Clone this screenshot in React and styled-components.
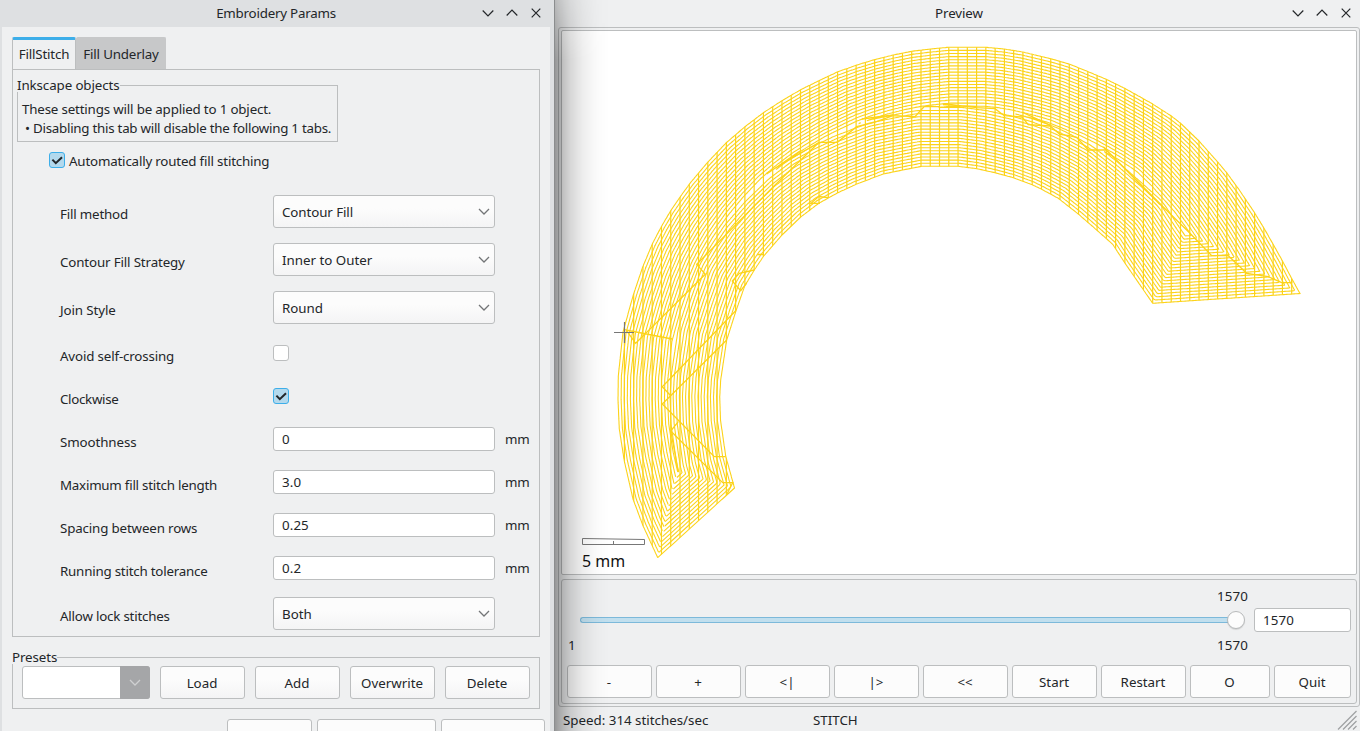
import React from 'react';
import styled, { createGlobalStyle } from 'styled-components';

const Global = createGlobalStyle`
  * { box-sizing: border-box; }
  body { margin: 0; overflow: hidden; background: #eff0f1; }
  button { font: inherit; color: inherit; }
`;

const Desktop = styled.div`
  display: flex;
  width: 1360px;
  height: 731px;
  overflow: hidden;
  background: #eff0f1;
  color: #232629;
  font: 13.33px/18px 'Noto Sans', sans-serif;
  white-space: nowrap;
`;

const Dialog = styled.section`
  position: relative;
  z-index: 1;
  flex: none;
  width: 555px;
  height: 731px;
  overflow: visible;
  background: #dee0e2;
  border-right: 1px solid #8b8d8e;
  &::after {
    content: '';
    position: absolute;
    left: 555px;
    top: 0;
    width: 54px;
    height: 731px;
    pointer-events: none;
    background: linear-gradient(to right, rgba(0,0,0,.37), rgba(0,0,0,.28) 10%, rgba(0,0,0,.16) 28%, rgba(0,0,0,.065) 52%, rgba(0,0,0,.015) 78%, transparent);
    mask-image: linear-gradient(to bottom, rgba(0,0,0,.6), #000 60px);
  }
`;

const TitleBar = styled.header`
  display: grid;
  grid-template-columns: 1fr auto 1fr;
  align-items: center;
  height: 27px;
  padding: 0 ${p => p.$right}px 0 ${p => p.$left}px;
`;
const Title = styled.span`
  grid-column: 2;
  margin-top: -2px;
  letter-spacing: ${p => p.$track || 0}px;
`;
const WindowButtons = styled.div`
  display: flex;
  justify-content: flex-end;
  gap: 12px;
  margin-top: -1px;
`;

const DialogBody = styled.div`
  display: flex;
  flex-direction: column;
  width: 548px;
  height: 704px;
  margin-left: 2px;
  padding: 10px 10px 0;
  background: #eff0f1;
  overflow: hidden;
  & > * { flex-shrink: 0; }
`;

const Tabs = styled.div`
  display: flex;
  height: 33px;
  margin-bottom: -1px;
`;
const Tab = styled.div`
  display: flex;
  align-items: center;
  justify-content: center;
  width: ${p => p.$w}px;
  height: 33px;
  padding-bottom: ${p => (p.$active ? 2 : 0)}px;
  letter-spacing: -0.17px;
  border: 1px solid ${p => (p.$active ? '#bcbebf' : '#c7c8c9')};
  border-top: ${p => (p.$active ? '3px solid #3daee9' : '1px solid #c7c8c9')};
  border-bottom-color: ${p => (p.$active ? '#eff0f1' : '#a2a4a5')};
  border-radius: 2px 2px 0 0;
  background: ${p => (p.$active ? '#eff0f1' : '#c7c8c9')};
`;

const TabPanel = styled.div`
  width: 528px;
  height: 568px;
  padding: 15px 4px 0;
  border: 1px solid #bcbebf;
`;

const Group = styled.fieldset`
  min-width: 0;
  width: ${p => p.$w}px;
  height: ${p => p.$h}px;
  margin: 0;
  padding: 0;
  border: 0;
  box-shadow: inset 0 0 0 1px #bcbebf;
`;
const GroupTitle = styled.div`
  width: fit-content;
  height: 16px;
  margin: -9px 0 2px 0;
  letter-spacing: -0.1px;
  background: #eff0f1;
`;
const Info = styled.div`
  padding: 6px 0 0 5px;
  line-height: 19px;
  letter-spacing: -0.17px;
`;
const Bullet = styled.div`
  padding-left: 3px;
  letter-spacing: -0.25px;
`;

const CheckRow = styled.label`
  display: flex;
  align-items: center;
  gap: 4px;
  height: 18px;
  margin: 9px 0 19px 32px;
  letter-spacing: -0.18px;
`;
const CheckText = styled.span`padding-top: 1px;`;
const Box = styled.span`
  display: flex;
  width: 16px;
  height: 16px;
  border: 1px solid ${p => (p.$on ? '#3daee9' : '#bcbebf')};
  border-radius: 3px;
  background: ${p => (p.$on ? '#b3d9ed' : '#fff')};
`;

const Row = styled.div`
  display: grid;
  grid-template-columns: 213px 222px auto;
  column-gap: 0;
  align-items: start;
  height: ${p => (p.$kind === 'select' ? 48 : 43)}px;
  margin-left: 43px;
  padding-top: ${p => ({ select: 7, check: 13, input: 9 })[p.$kind]}px;
`;
const RowLabel = styled.span`
  margin-top: ${p => ({ select: 10, check: 2, input: 6 })[p.$kind]}px;
  letter-spacing: ${p => p.$track}px;
`;
const Unit = styled.span`
  margin: 3px 0 0 10px;
  letter-spacing: -0.3px;
`;

const Select = styled.div`
  display: flex;
  align-items: center;
  justify-content: space-between;
  height: 33px;
  padding: 0 4px 0 8px;
  letter-spacing: ${p => p.$track}px;
  border: 1px solid #bcbebf;
  border-radius: 3px;
  background: linear-gradient(#fcfcfc 40%, #f4f4f5);
`;
const Field = styled.div`
  display: flex;
  align-items: center;
  width: ${p => (p.$w ? p.$w + 'px' : 'auto')};
  height: 24px;
  padding-left: 8px;
  letter-spacing: 0.1px;
  border: 1px solid #bcbebf;
  border-radius: 3px;
  background: #fff;
`;

const PresetGroup = styled(Group)`margin-top: 20px;`;
const PresetRow = styled.div`
  display: flex;
  gap: 10px;
  padding-left: 10px;
`;
const PresetCombo = styled.div`
  display: flex;
  justify-content: flex-end;
  width: 128px;
  height: 33px;
  border: 1px solid #bcbebf;
  border-radius: 3px;
  background: #fff;
`;
const PresetArrow = styled.div`
  display: flex;
  align-items: center;
  justify-content: center;
  width: 30px;
  margin: -1px;
  border-radius: 0 3px 3px 0;
  background: #a5a6a8;
`;

const Button = styled.button`
  width: ${p => p.$w || 85}px;
  height: 33px;
  padding: 0 1px 0 0;
  flex: none;
  border: 1px solid #bcbebf;
  border-radius: 3px;
  background: ${p => (p.$flat ? '#fcfcfc' : 'linear-gradient(#fcfcfc 40%, #f4f4f5)')};
`;
const Actions = styled.div`
  display: flex;
  gap: 5px;
  margin: 10px -5px 0 215px;
`;

const Preview = styled.section`
  flex: 1;
  min-width: 0;
  display: flex;
  flex-direction: column;
`;
const Frame = styled.div`
  display: flex;
  flex-direction: column;
  gap: 4px;
  height: 680px;
  margin-left: 3px;
  padding: 2px;
  border: 1px solid #bcbebf;
  border-radius: 3px;
`;
const Canvas = styled.div`
  height: 545px;
  border: 1px solid #bcbebf;
  border-radius: 2px;
  background: #fff;
`;
const Controls = styled.div`
  display: flex;
  flex-direction: column;
  height: 125px;
  padding: 6px 5px 0;
  border: 1px solid #bcbebf;
  border-radius: 3px;
`;
const SliderRow = styled.div`
  display: flex;
  align-items: center;
  height: 68px;
  margin-bottom: 11px;
`;
const SliderBlock = styled.div`
  display: flex;
  flex-direction: column;
  width: 687px;
`;
const SliderLabels = styled.div`
  display: flex;
  justify-content: space-between;
  height: 18px;
  padding: 0 6px 0 1px;
  letter-spacing: 0.15px;
`;
const Slider = styled.div`
  display: flex;
  align-items: center;
  height: 31px;
  padding-left: 13px;
`;
const Track = styled.div`
  width: 648px;
  height: 6px;
  border: 1px solid #7cb9da;
  border-right: 0;
  border-radius: 3px 0 0 3px;
  background: #c1dfee;
`;
const Knob = styled.div`
  width: 18px;
  height: 18px;
  margin-left: -1px;
  border: 1px solid #b8babb;
  border-radius: 50%;
  background: #fcfcfc;
  box-shadow: 0 1px 1px rgba(0,0,0,.12);
`;
const ButtonRow = styled.div`
  display: flex;
  gap: 4px;
`;
const StatusBar = styled.footer`
  display: grid;
  grid-template-columns: 250px 1fr auto;
  align-items: center;
  height: 24px;
  padding: 2px 3px 0 8px;
`;

const DownIcon = ({ color = '#232629' }) => (
  <svg width="12" height="12" viewBox="0 0 12 12" fill="none" stroke={color} strokeWidth="1.2"><path d="M.7 3.500 6 8.800l5.300-5.300" /></svg>
);
const UpIcon = () => (
  <svg width="12" height="12" viewBox="0 0 12 12" fill="none" stroke="#232629" strokeWidth="1.2"><path d="M.7 8.500 6 3.200l5.300 5.300" /></svg>
);
const CloseIcon = () => (
  <svg width="12" height="12" viewBox="0 0 12 12" fill="none" stroke="#232629" strokeWidth="1.2"><path d="m1.700 1.700 8.600 8.600m0-8.600-8.600 8.600" /></svg>
);
const WindowControls = () => <WindowButtons><DownIcon /><UpIcon /><CloseIcon /></WindowButtons>;
const Arrow = ({ color = '#737577' }) => (
  <svg width="12" height="12" viewBox="0 0 12 12" fill="none" stroke={color} strokeWidth="1.3"><path d="m1 3 5 5 5-5" /></svg>
);
const Check = ({ on }) => (
  <Box $on={on}>
    {on && <svg width="14" height="14" viewBox="0 0 14 14" fill="none" stroke="#232629" strokeWidth="2"><path d="m2.400 6.600 3.400 3.600 6.200-6" /></svg>}
  </Box>
);

const OUTLINE = [
  [657.7,557.7],[642.7,525],[633,499],[624.3,461],[619.3,429],[618,400],[618.3,376],[623,332],[633.3,295],[642.7,267],[652.3,244],[661.3,226.7],[670.7,210.7],[680.3,196.7],[690,183.3],[707,163],[726,143],[745,126.7],[763.7,112.5],[782,100.7],[800.7,89.7],[819,80.7],[837.3,72],[856,65.3],[874.3,59.7],[893.3,55],[911.7,51.3],[930.3,49],[948.3,47.3],[985.7,47.3],[1004.3,49],[1022.7,52],[1050.7,58.7],[1069,64],[1087.3,71.3],[1106.3,79.3],[1124.7,88.3],[1143.3,98.7],[1152.3,103.8],[1171,115.8],[1180.3,123],[1199,141],[1218.3,162.7],[1226.7,172.7],[1239.3,190],[1254.3,212.3],[1264,228.3],[1273,244],[1282.3,260.7],[1291.7,278.5],[1300,293.5],
  [1152.7,303.3],[1124.7,262.7],[1112.7,244.3],[1096.7,230],[1078.3,214],[1058.3,198.3],[1041.7,189.3],[1032.3,184.7],[1013.3,177.7],[995,172.7],[976.7,168.7],[958.3,166.3],[921.7,166.3],[902.7,170],[883.3,174],[856,184.3],[837.3,193],[818.7,203.3],[800.7,217],[782,235],[763.7,256],[754.3,270],[744.7,286],[735.7,311.7],[726.7,340],[720.7,380],[719.7,397],[720.5,420],[725.7,456],[734.5,488],
];

function distance(x, y) {
  let best = Infinity;
  for (let i = 0; i < OUTLINE.length; i++) {
    const [ax, ay] = OUTLINE[i];
    const [bx, by] = OUTLINE[(i + 1) % OUTLINE.length];
    const dx = bx - ax, dy = by - ay;
    const t = Math.max(0, Math.min(1, ((x - ax) * dx + (y - ay) * dy) / (dx * dx + dy * dy)));
    best = Math.min(best, Math.hypot(x - ax - t * dx, y - ay - t * dy));
  }
  return best;
}

function normal(i) {
  const n = OUTLINE.length;
  const [ax, ay] = OUTLINE[i % n];
  const [bx, by] = OUTLINE[(i + 1) % n];
  const len = Math.hypot(bx - ax, by - ay);
  return [-(by - ay) / len, (bx - ax) / len, len];
}

// Rows of the contour fill: the outline moved inwards by one row spacing at a time,
// with round joins at its hollow corners.
function contourRows(spacing) {
  let d = '';
  for (let off = 0; off < 80; off += spacing) {
    let last = null;
    const add = (x, y) => {
      if (distance(x, y) < off - 0.01) return;
      const join = last && Math.hypot(x - last[0], y - last[1]) < 6;
      d += `${join ? 'L' : 'M'}${x.toFixed(1)} ${y.toFixed(1)}`;
      last = [x, y];
    };
    for (let i = 0; i < OUTLINE.length; i++) {
      const [ax, ay] = OUTLINE[i];
      const [bx, by] = OUTLINE[(i + 1) % OUTLINE.length];
      const [nx, ny, len] = normal(i);
      const steps = Math.max(1, Math.ceil(len / 1.5));
      for (let s = 0; s <= steps; s++) {
        add(ax + ((bx - ax) * s) / steps + nx * off, ay + ((by - ay) * s) / steps + ny * off);
      }
      const [mx, my] = normal(i + 1);
      for (let s = 1; s < 6; s++) {
        const vx = nx + ((mx - nx) * s) / 6, vy = ny + ((my - ny) * s) / 6;
        const k = off / Math.hypot(vx, vy);
        add(bx + vx * k, by + vy * k);
      }
    }
  }
  return d;
}

const ROWS = contourRows(3.1);
const COLUMNS = Array.from({ length: 73 }, (_, i) => `M${(624.4 + i * 9.268).toFixed(2)} 40V565`).join('');
const TRAVEL = [
  'M766.7 173.3 819 142.3H837.3L856.7 126.7 874.3 122.3 893 115.7 915 116.7 924 106.7H940',
  'M766.7 174 800 151M861.7 119 893.3 115M943.3 103.7 976.7 107.7 995 108.7 1004.3 115.7 1022 117 1028.3 124.7 1050 126 1060 134.3 1069 135.7 1076.7 137.3 1088.3 150H1106.3L1163 206.7 1190 233.3 1211.7 255.7H1228.3L1246.7 273.3 1268.3 276.7 1281.7 282.7H1291.7V279',
  'M943 104.7 976 106.7M1022.7 112.3 1050 125M1103.3 146.7 1160 204.5',
  'M819 142.3 773.3 186.7 696.7 264.3 705.3 274.3 635.7 343.3 626 330 672.3 339',
  'M735.7 310.7 662.3 386.7 670 395M726.7 340 662.3 404 714.3 456.7H725.7M678.3 421.7 670.7 431 722.7 482.7H732.7L727 494M670.7 431 678.5 472',
  'M754.3 270 739.3 273.3 732.3 281 740.7 290.7 746.7 283M757 254.5H764M828.3 197.7 818.7 196.5 811 203.3H820',
].join('');

const StitchPlan = () => (
  <svg width="794" height="543" viewBox="562 31 794 543" fill="none" style={{ display: 'block' }}>
    <defs>
      <clipPath id="shape"><path d={'M' + OUTLINE.map(p => p.join(' ')).join('L') + 'Z'} /></clipPath>
    </defs>
    <g stroke="#fcd31a">
      <path d={ROWS} strokeWidth="1.1" />
      <path d={COLUMNS} strokeWidth="1.2" clipPath="url(#shape)" />
      <path d={TRAVEL} strokeWidth="1.3" />
    </g>
    <path d="M614 332.5H634M624.5 322V343" stroke="#777" strokeWidth="1.2" />
    <path d="M582.5 538.5 644.5 539.5V544.5H582.5ZM613.5 541V544" stroke="#777" />
    <text x="582" y="567" fill="#111" fontSize="16" fontFamily="'Noto Sans', sans-serif">5 mm</text>
  </svg>
);

const PARAMS = [
  ['select', 'Fill method', 'Contour Fill', -0.18, -0.08],
  ['select', 'Contour Fill Strategy', 'Inner to Outer', -0.14, 0],
  ['select', 'Join Style', 'Round', -0.1, 0],
  ['check', 'Avoid self-crossing', false, -0.15],
  ['check', 'Clockwise', true, -0.3],
  ['input', 'Smoothness', '0', -0.1],
  ['input', 'Maximum fill stitch length', '3.0', -0.23],
  ['input', 'Spacing between rows', '0.25', -0.15],
  ['input', 'Running stitch tolerance', '0.2', -0.21],
  ['select', 'Allow lock stitches', 'Both', -0.2, 0],
];

const Param = ({ kind, label, value, track, valueTrack }) => (
  <Row $kind={kind}>
    <RowLabel $kind={kind} $track={track}>{label}</RowLabel>
    {kind === 'select' && <Select $track={valueTrack}>{value}<Arrow /></Select>}
    {kind === 'check' && <Check on={value} />}
    {kind === 'input' && <><Field>{value}</Field><Unit>mm</Unit></>}
  </Row>
);

const PLAYBACK = [['-', 85], ['+', 85], ['<|', 85], ['|>', 85], ['<<', 85], ['Start', 85], ['Restart', 85], ['O', 80], ['Quit', 77]];

export default function App() {
  return (
    <Desktop>
      <Global />
      <Dialog>
        <TitleBar $left={10} $right={12}>
          <Title $track={-0.22}>Embroidery Params</Title>
          <WindowControls />
        </TitleBar>
        <DialogBody>
          <Tabs>
            <Tab $active $w={64}>FillStitch</Tab>
            <Tab $w={90}>Fill Underlay</Tab>
          </Tabs>
          <TabPanel>
            <Group $w={321} $h={57}>
              <GroupTitle>Inkscape objects</GroupTitle>
              <Info>
                <div>These settings will be applied to 1 object.</div>
                <Bullet>• Disabling this tab will disable the following 1 tabs.</Bullet>
              </Info>
            </Group>
            <CheckRow><Check on /><CheckText>Automatically routed fill stitching</CheckText></CheckRow>
            {PARAMS.map(([kind, label, value, track, valueTrack]) => (
              <Param key={label} kind={kind} label={label} value={value} track={track} valueTrack={valueTrack} />
            ))}
          </TabPanel>
          <PresetGroup $w={528} $h={52}>
            <GroupTitle>Presets</GroupTitle>
            <PresetRow>
              <PresetCombo><PresetArrow><Arrow color="#cfd0d1" /></PresetArrow></PresetCombo>
              <Button>Load</Button>
              <Button>Add</Button>
              <Button>Overwrite</Button>
              <Button>Delete</Button>
            </PresetRow>
          </PresetGroup>
          <Actions>
            <Button $w={85} />
            <Button $w={119} />
            <Button $w={104} />
          </Actions>
        </DialogBody>
      </Dialog>
      <Preview>
        <TitleBar $left={11} $right={8}>
          <Title $track={-0.1}>Preview</Title>
          <WindowControls />
        </TitleBar>
        <Frame>
          <Canvas><StitchPlan /></Canvas>
          <Controls>
            <SliderRow>
              <SliderBlock>
                <SliderLabels><span /><span>1570</span></SliderLabels>
                <Slider><Track /><Knob /></Slider>
                <SliderLabels><span>1</span><span>1570</span></SliderLabels>
              </SliderBlock>
              <Field $w={97}>1570</Field>
            </SliderRow>
            <ButtonRow>
              {PLAYBACK.map(([label, w]) => <Button key={label} $flat $w={w}>{label}</Button>)}
            </ButtonRow>
          </Controls>
        </Frame>
        <StatusBar>
          <span>Speed: 314 stitches/sec</span>
          <span>STITCH</span>
          <svg width="20" height="20" viewBox="0 0 20 20" stroke="#a0a2a4" strokeWidth="1.3"><path d="M1 19.500 19.500 1M6 19.500 19.500 6M11 19.500 19.500 11M16 19.500l3.500-3.500" /></svg>
        </StatusBar>
      </Preview>
    </Desktop>
  );
}
